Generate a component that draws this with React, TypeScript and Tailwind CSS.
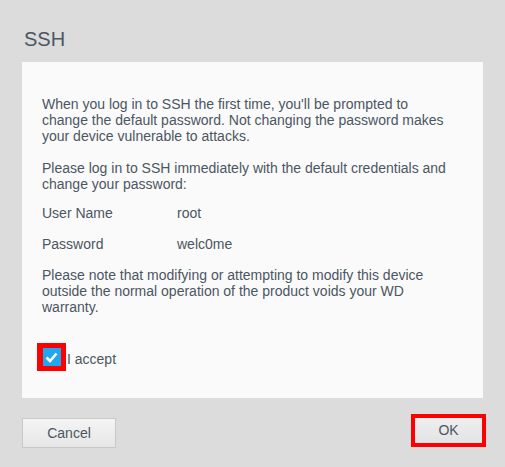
export default function App() {
  const font = { fontFamily: '"Liberation Sans", Arial, sans-serif' };

  return (
    <main style={font} className="min-h-[467px] w-[505px] bg-[#dcdcdc] px-[22px] pt-[27px] text-[#4b5662]">
      <h1 className="pl-[2px] text-[20px] leading-[24px]">SSH</h1>

      <section className="mt-[11px] h-[336px] bg-[#fafafa] pl-[20px] pr-[30px] pt-[34px] text-[14px] leading-[16px]">
        <p>
          When you log in to SSH the first time, you'll be prompted to change the default password. Not changing the password makes
          your device vulnerable to attacks.
        </p>
        <p className="mt-[16px]">Please log in to SSH immediately with the default credentials and change your password:</p>

        <div className="mt-[13px] flex flex-col gap-[15px]">
          <div className="flex">
            <span className="w-[135px]">User Name</span>
            <span>root</span>
          </div>
          <div className="flex">
            <span className="w-[135px]">Password</span>
            <span>welc0me</span>
          </div>
        </div>

        <p className="mt-[15px]">
          Please note that modifying or attempting to modify this device outside the normal operation of the product voids your WD
          warranty.
        </p>

        <label className="mt-[28px] ml-[-5px] flex items-center">
          <span className="flex h-[28px] w-[29px] items-center justify-center bg-[#ff0000]">
            <span className="flex h-[18px] w-[18px] items-center justify-center bg-[#1ea7f2]">
              <svg width="13" height="11" viewBox="0 0 13 11" fill="none">
                <path d="M1.5 5.5 L5 9 L11.5 1.5" stroke="#fff" strokeWidth="2.6" />
              </svg>
            </span>
          </span>
          <span className="ml-[1px] mt-[3px]">I accept</span>
        </label>
      </section>

      <div className="mt-[20px] flex items-start justify-between">
        <button className="h-[30px] w-[94px] border border-[#c8c8c8] bg-gradient-to-b from-[#f4f4f4] to-[#e6e6e6] text-[14px] text-[#4b5662]">
          Cancel
        </button>
        <div className="relative mr-[-3px] mt-[-4px] h-[33px] w-[75px] border-[4px] border-[#ff0000]">
          <button className="h-full w-full bg-gradient-to-b from-[#eeeeee] to-[#e4e4e4] text-[14px] text-[#4b5662]">OK</button>
        </div>
      </div>
    </main>
  );
}
